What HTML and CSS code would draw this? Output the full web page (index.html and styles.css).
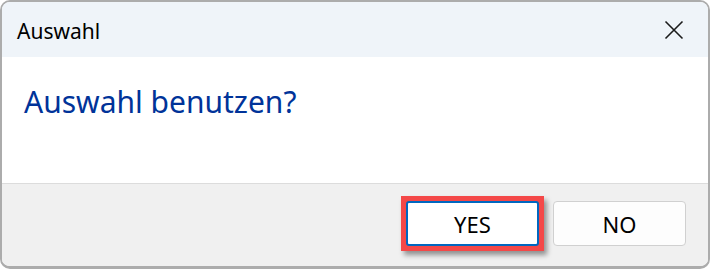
FILE: index.html
```html
<!DOCTYPE html>
<html>
<head>
<meta charset="utf-8">
<link rel="stylesheet" href="styles.css">
</head>
<body>
<div class="window">
  <div class="titlebar">
    <span class="title">Auswahl</span>
    <span class="close">
      <svg width="20" height="20" viewBox="0 0 20 20"><path d="M1.5 1.5 L18.5 18.5 M18.5 1.5 L1.5 18.5" stroke="#1b1b1b" stroke-width="1.6" fill="none"/></svg>
    </span>
  </div>
  <div class="content">
    <div class="instruction">Auswahl benutzen?</div>
  </div>
  <div class="footer">
    <span class="highlight"><button class="btn focused">YES</button></span>
    <button class="btn">NO</button>
  </div>
</div>
</body>
</html>
```
FILE: styles.css
```css
html, body {
  margin: 0;
  padding: 0;
  background: #ffffff;
}
.window {
  width: 710px;
  height: 269px;
  box-sizing: border-box;
  border: 2px solid #acacac;
  border-bottom-width: 3px;
  border-radius: 10px;
  overflow: hidden;
  display: flex;
  flex-direction: column;
  font-family: "Noto Sans", "Open Sans", sans-serif;
}
.titlebar {
  height: 55px;
  background: #eff4f9;
  display: flex;
  align-items: center;
  justify-content: space-between;
  padding: 0 15px 0 15px;
}
.title {
  font-size: 21px;
  color: #000;
  margin-top: 2px;
}
.close {
  display: flex;
  width: 20px;
  height: 20px;
  margin-right: 9px;
  margin-top: 1px;
}
.content {
  height: 126px;
  background: #ffffff;
  padding: 0 22px;
}
.instruction {
  color: #003399;
  font-size: 30px;
  margin-top: 24px;
}
.footer {
  flex: 1;
  background: #f0f0f0;
  border-top: 1px solid #dcdcdc;
  display: flex;
  justify-content: flex-end;
  align-items: flex-start;
  gap: 9px;
  padding: 12px 22px 0 0;
}
.highlight {
  display: flex;
  padding: 5px;
  background: #f44848;
  box-shadow: 3px 4px 5px rgba(0,0,0,0.4);
}
.btn {
  width: 133px;
  height: 45px;
  box-sizing: border-box;
  background: #fdfdfd;
  border: 1px solid #d0d0d0;
  border-radius: 4px;
  font-family: "Noto Sans", "Open Sans", sans-serif;
  font-size: 22px;
  color: #000;
  padding: 0;
  margin-top: 5px;
}
.btn.focused {
  margin-top: 0;
  border: 2px solid #0067c0;
  border-radius: 3px;
  background: #ffffff;
}
```
